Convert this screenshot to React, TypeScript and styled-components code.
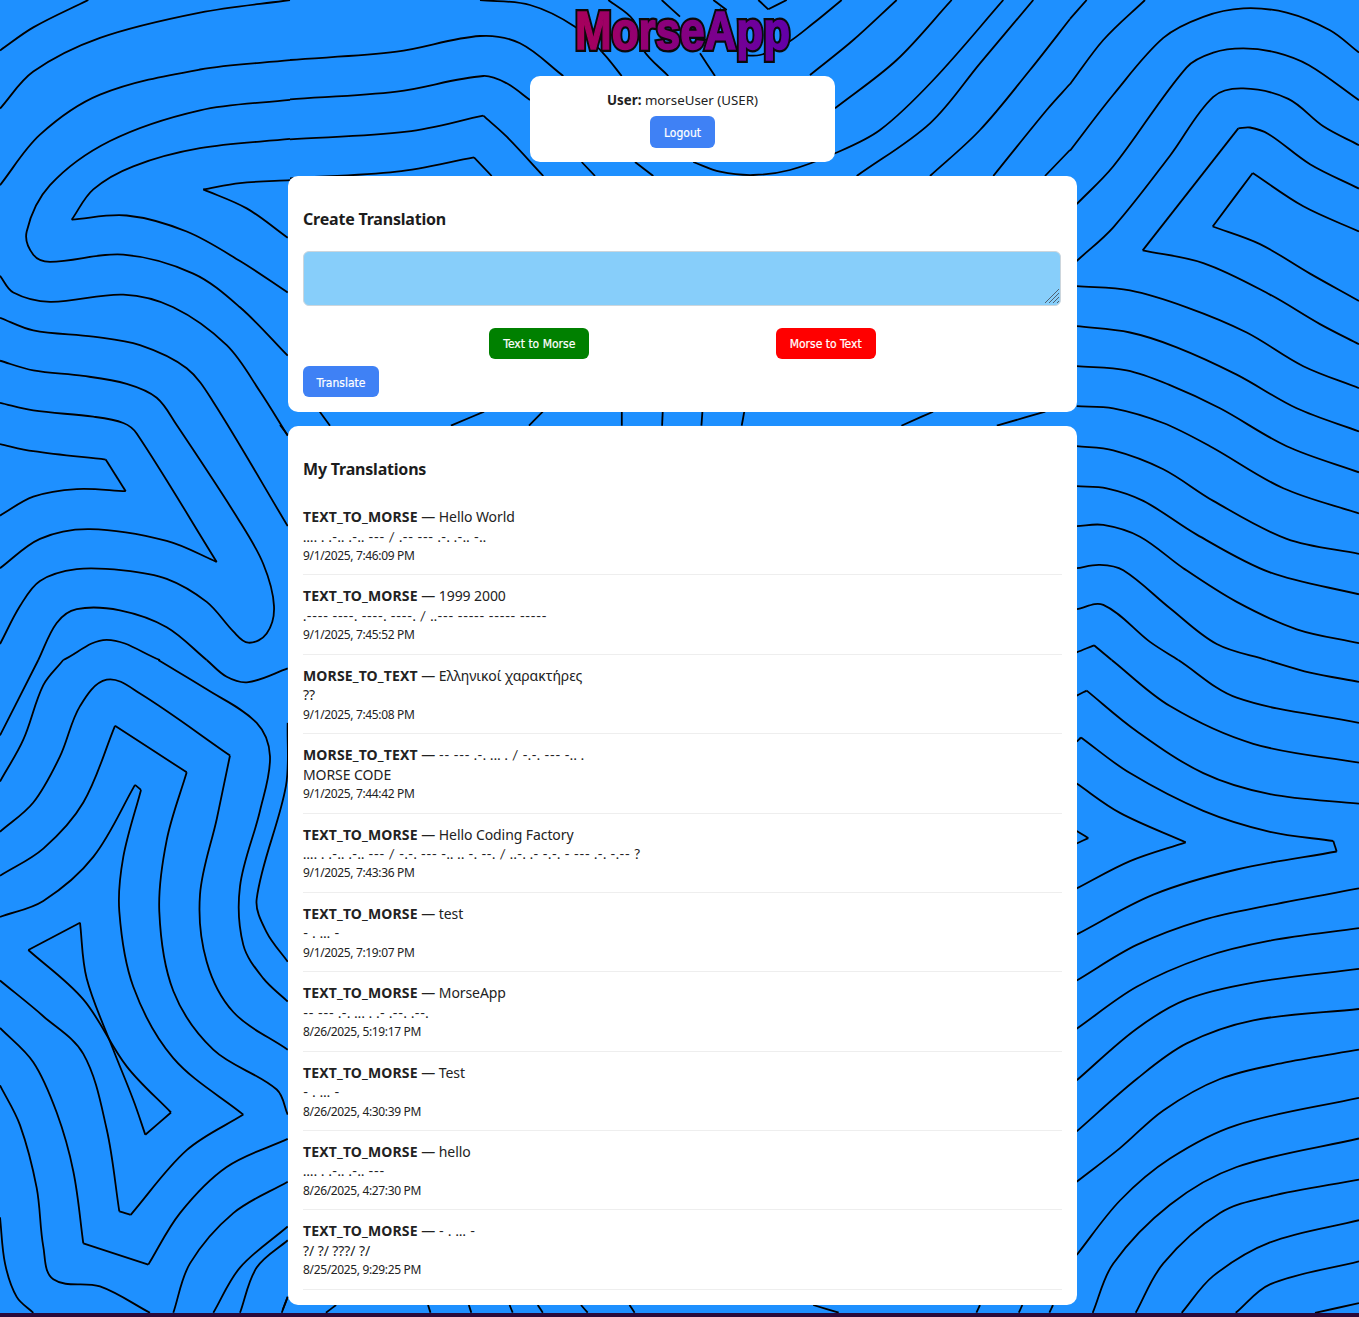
import React from "react";
import styled, { createGlobalStyle } from "styled-components";

const GlobalStyle = createGlobalStyle`
    html, body {
        margin: 0;
        padding: 0;
        background: #1e90ff;
    }
    body {
        font-family: "Noto Sans", "Open Sans", sans-serif;
        color: #222;
        overflow: hidden;
    }
    * {
        box-sizing: border-box;
    }
`;

// contour lines of the wallpaper, traced crop by crop
interface Crop {
    x: number;
    y: number;
    sx: number;
    sy: number;
    lines: number[][];
}

const crops: Crop[] = [
    {
        // left, top half
        x: 0, y: 0, sx: 1 / 3, sy: 660 / 1568,
        lines: [
            [0,120, 100,65, 265,0],
            [0,258, 100,170, 300,90, 600,30, 870,0],
            [0,440, 120,320, 300,225, 600,165, 870,143],
            [870,237, 600,262, 330,335, 150,440, 80,550, 100,605, 150,622, 370,605, 580,650, 720,730, 863,845],
            [870,330, 600,352, 400,395, 280,450, 215,522],
            [215,522, 380,512, 560,550, 720,620, 863,695],
            [870,428, 720,435, 610,450],
            [610,450, 740,495, 863,565],
            [0,655, 40,695, 150,717, 370,700, 520,730, 680,820, 780,930, 863,1035],
            [0,755, 100,785, 280,800, 420,820, 560,875, 640,955, 863,1250],
            [0,857, 100,880, 250,893, 380,912, 470,945, 530,1010, 720,1240, 790,1340, 822,1440, 800,1505, 745,1527, 700,1500, 620,1430, 500,1375, 370,1355, 230,1352, 120,1380, 60,1440, 0,1530],
            [0,957, 100,975, 280,990, 370,1005, 410,1030, 650,1335],
            [650,1335, 500,1285, 270,1257, 120,1280, 0,1350],
            [0,1055, 100,1072, 317,1092],
            [317,1092, 377,1167],
            [377,1167, 230,1162, 100,1180, 0,1225],
            [115,1568, 170,1480, 230,1447, 360,1450, 500,1490, 620,1568],
            [190,1568, 320,1520, 480,1568],
        ],
    },
    {
        // left, bottom half
        x: 0, y: 660, sx: 1 / 3, sy: 657 / 1568,
        lines: [
            [115,0, 0,180],
            [190,0, 130,60, 70,190, 0,290],
            [475,0, 620,70, 770,150, 810,230, 780,360, 720,540, 730,680, 790,760, 863,815],
            [620,0, 680,40, 745,53, 863,20],
            [863,150, 858,300, 770,570, 800,650, 863,720],
            [0,410, 100,340, 180,230, 240,110, 320,47, 420,80, 690,228],
            [690,228, 650,380, 600,560, 620,720, 700,840, 863,930],
            [0,515, 130,450, 250,340, 345,157],
            [345,157, 560,268],
            [560,268, 500,430, 478,600, 520,790, 640,930, 830,1025, 863,1085],
            [0,613, 130,575, 280,470, 405,298],
            [405,298, 423,310],
            [423,310, 370,470, 358,600, 400,780, 520,950, 730,1085],
            [730,1085, 560,1170, 392,1324],
            [392,1324, 358,1316],
            [358,1316, 320,1120, 250,940, 130,850, 0,765],
            [85,692, 240,627],
            [240,627, 260,760, 340,930, 400,1050, 436,1133],
            [436,1133, 513,1080],
            [513,1080, 380,970, 250,810, 85,692],
            [0,878, 100,960, 170,1080, 220,1220, 250,1392],
            [250,1392, 445,1443],
            [445,1443, 540,1320, 680,1210, 863,1143],
            [0,1015, 60,1110, 110,1260, 130,1400, 160,1478, 300,1495, 450,1558],
            [0,1330, 15,1440, 50,1520, 100,1558],
            [520,1558, 570,1440, 700,1320, 863,1245],
            [640,1558, 720,1450, 863,1352],
            [720,1558, 770,1450, 863,1385],
            [845,1558, 863,1520],
        ],
    },
    {
        // top middle, left of the logo
        x: 280, y: 0, sx: 1 / 3, sy: 1 / 3,
        lines: [
            [600,0, 750,15, 885,80, 970,160, 1025,228],
            [30,180, 350,155, 600,108, 720,130, 850,228],
            [30,298, 350,275, 610,228, 680,250, 750,300],
            [30,418, 380,395, 610,347],
            [610,347, 680,410, 790,528],
            [30,535, 350,515, 582,472],
            [582,472, 635,528],
            [985,0, 1060,60, 1090,150, 1165,228],
            [1145,0, 1200,50],
            [905,486, 945,528],
            [1065,486, 1120,528],
        ],
    },
    {
        // top middle, right of the logo
        x: 680, y: 0, sx: 1 / 3, sy: 1 / 3,
        lines: [
            [100,0, 140,30],
            [235,0, 265,28],
            [265,28, 320,0],
            [485,0, 400,70, 320,130, 240,165, 180,165],
            [60,160, 105,228],
            [650,0, 520,120, 390,225],
            [815,0, 650,180, 465,325],
            [970,0, 760,240, 600,390, 465,460, 330,510, 220,525, 120,515, 40,486],
            [1060,0, 900,190, 750,370, 530,528],
            [1170,57, 1050,210, 900,390, 750,528],
            [1170,252, 1100,330, 940,528],
            [1170,450, 1095,528],
        ],
    },
    {
        // right, top half
        x: 1070, y: 0, sx: 1 / 3, sy: 660 / 1568,
        lines: [
            [0,45, 50,0],
            [0,200, 100,95, 225,0],
            [0,358, 130,225, 280,90, 400,40, 520,20, 650,30, 780,72, 867,125],
            [20,485, 130,395, 350,160, 430,125, 520,115, 620,125, 717,155, 867,238],
            [20,620, 130,540, 300,370, 430,230, 520,210, 655,235, 760,300, 867,345],
            [218,595, 505,305],
            [505,305, 540,303, 595,318, 720,390, 867,448],
            [218,595, 400,625, 600,700, 750,770, 867,818],
            [428,538, 548,411],
            [548,411, 700,490, 867,550],
            [428,538, 570,580, 720,650, 867,715],
            [20,680, 180,690, 350,730, 530,790, 700,870, 867,922],
            [20,775, 180,790, 320,825, 500,890, 680,970, 867,1025],
            [20,870, 170,880, 300,915, 450,970, 650,1060, 867,1122],
            [20,965, 130,970, 280,1005, 420,1060, 640,1160, 867,1220],
            [20,1060, 130,1070, 280,1115, 430,1190, 650,1280, 867,1316],
            [20,1155, 110,1160, 220,1190, 380,1270, 600,1360, 867,1412],
            [20,1250, 100,1247, 210,1275, 340,1350, 500,1430, 680,1495, 867,1528],
            [20,1350, 90,1342, 160,1355, 300,1445, 440,1530, 590,1568],
            [20,1447, 100,1437, 240,1525, 325,1568],
            [20,1550, 72,1533],
            [72,1533, 125,1568],
        ],
    },
    {
        // right, bottom half
        x: 1070, y: 660, sx: 1 / 3, sy: 657 / 1568,
        lines: [
            [590,0, 720,30, 867,52],
            [325,0, 500,90, 867,150],
            [125,0, 300,110, 550,200, 867,245],
            [20,85, 50,73],
            [50,73, 200,170, 400,270, 600,320, 867,343],
            [20,195, 33,185],
            [33,185, 180,270, 400,360, 600,410, 790,432],
            [790,432, 800,457],
            [800,457, 500,500, 250,560, 20,655],
            [20,295, 150,365, 347,435],
            [347,435, 180,480, 20,545],
            [20,408, 55,425],
            [55,425, 20,438],
            [20,765, 200,680, 400,620, 600,585, 867,545],
            [20,880, 200,780, 400,710, 600,670, 867,640],
            [20,1003, 200,880, 350,810, 550,770, 867,737],
            [20,1125, 200,1000, 350,915, 550,860, 867,833],
            [20,1245, 150,1165, 280,1075, 450,1000, 650,960, 867,930],
            [20,1420, 150,1290, 300,1190, 500,1110, 867,1045],
            [68,1558, 130,1440, 300,1300, 500,1210, 867,1142],
            [197,1558, 280,1440, 450,1320, 600,1280, 867,1240],
            [335,1558, 430,1470, 600,1390, 867,1337],
            [497,1558, 600,1490, 867,1435],
            [735,1558, 867,1535],
        ],
    },
    {
        // strip between the two cards
        x: 280, y: 405, sx: 800 / 1568, sy: 1 / 3,
        lines: [
            [0,60, 15,90],
            [78,20, 98,62],
            [400,20, 335,62],
            [515,20, 488,62],
            [670,20, 670,62],
            [750,20, 749,62],
            [828,20, 826,62],
            [910,20, 905,62],
            [1280,20, 1218,62],
            [1500,20, 1405,62],
        ],
    },
    {
        // strip under the last card
        x: 280, y: 1280, sx: 800 / 1568, sy: 1 / 3,
        lines: [
            [15,50, 5,90],
            [110,75, 90,98],
            [290,75, 295,98],
            [370,75, 375,98],
            [450,75, 456,98],
            [505,75, 515,98],
            [590,75, 603,98],
            [685,75, 695,98],
            [1045,75, 1095,98],
            [1372,75, 1365,98],
            [1455,75, 1448,98],
            [1515,75, 1508,98],
        ],
    },
];

// spline through the traced points, handles scaled to the segment so uneven spacing stays smooth
const toPath = (crop: Crop, flat: number[]) => {
    const pts: [number, number][] = [];
    for (let i = 0; i < flat.length; i += 2) {
        pts.push([crop.x + flat[i] * crop.sx, crop.y + flat[i + 1] * crop.sy]);
    }
    const tangent = (i: number) => {
        const a = pts[i - 1] || pts[i];
        const b = pts[i + 1] || pts[i];
        const dx = b[0] - a[0];
        const dy = b[1] - a[1];
        const len = Math.hypot(dx, dy) || 1;
        return [dx / len, dy / len];
    };
    let d = `M${pts[0][0].toFixed(1)} ${pts[0][1].toFixed(1)}`;
    for (let i = 0; i < pts.length - 1; i++) {
        const p1 = pts[i];
        const p2 = pts[i + 1];
        const len = Math.hypot(p2[0] - p1[0], p2[1] - p1[1]) / 3;
        const t1 = tangent(i);
        const t2 = tangent(i + 1);
        d += `C${(p1[0] + t1[0] * len).toFixed(1)} ${(p1[1] + t1[1] * len).toFixed(1)} ${(p2[0] - t2[0] * len).toFixed(1)} ${(p2[1] - t2[1] * len).toFixed(1)} ${p2[0].toFixed(1)} ${p2[1].toFixed(1)}`;
    }
    return d;
};

const Wallpaper = styled.svg`
    position: fixed;
    top: 0;
    left: 0;
    width: 1359px;
    height: 1317px;
    z-index: 0;
`;

const Page = styled.div`
    position: relative;
    z-index: 1;
    display: flex;
    flex-direction: column;
    align-items: center;
    width: 1365px;
`;

const Logo = styled.h1`
    position: relative;
    margin: 0;
    height: 76px;
    padding-top: 1px;
    font-family: "Liberation Sans", sans-serif;
    font-size: 53px;
    line-height: 60px;
    font-weight: 700;
    transform: scaleX(0.83);
    color: #0a0a0a;
    -webkit-text-stroke: 6px #0a0a0a;

    &::after {
        content: attr(data-text);
        position: absolute;
        top: 1px;
        left: 0;
        background: linear-gradient(90deg, #a8005a, #6200a8);
        -webkit-background-clip: text;
        background-clip: text;
        color: transparent;
        -webkit-text-stroke: 1.5px transparent;
    }
`;

const Card = styled.section`
    width: 789px;
    padding: 15px;
    margin-bottom: 14px;
    background: #fff;
    border-radius: 10px;
`;

const UserCard = styled.div`
    display: flex;
    flex-direction: column;
    align-items: center;
    width: 305px;
    height: 86px;
    padding-top: 15px;
    margin-bottom: 14px;
    background: #fff;
    border-radius: 10px;
    font-size: 13.3px;
    line-height: 19px;
`;

const UserLine = styled.div`
    margin-bottom: 6px;
`;

const Heading = styled.h3`
    margin: 18px 0 0;
    font-size: 16px;
    letter-spacing: -0.2px;
    line-height: 20px;
    font-weight: 700;
    color: #1c1c1c;
`;

const InputBox = styled.div`
    position: relative;
    width: 758px;
    height: 55px;
    margin-top: 22px;
`;

const Input = styled.textarea`
    display: block;
    width: 100%;
    height: 100%;
    padding: 8px;
    background: #87cefa;
    border: 1.5px solid #ccd6dd;
    border-radius: 6px;
    outline: none;
    resize: none;
`;

const Grip = styled.svg`
    position: absolute;
    right: 2px;
    bottom: 3px;
    width: 14px;
    height: 14px;
`;

const ModeRow = styled.div`
    display: flex;
    justify-content: space-evenly;
    margin: 22px 0 7px;
`;

const Button = styled.button<{ $bg?: string; $w: number }>`
    width: ${({ $w }) => $w}px;
    height: 31px;
    padding: 1px 0 0;
    border: none;
    border-radius: 6px;
    background: ${({ $bg }) => $bg || "#3f81f5"};
    color: #fff;
    font-family: "DejaVu Sans Condensed", "DejaVu Sans", sans-serif;
    font-stretch: condensed;
    font-size: 12px;
    -webkit-text-stroke: 0.2px #fff;
    cursor: pointer;
`;

const LogoutButton = styled(Button)`
    height: 32px;
`;

const TranslateButton = styled(Button)`
    padding-top: 2px;
`;

const List = styled.ul`
    list-style: none;
    margin: 17.1px 0 0;
    padding: 0;
`;

const Item = styled.li`
    padding: 11px 0 9px;
    border-bottom: 1px solid #eee;
    font-size: 14px;
    line-height: 19.45px;
    letter-spacing: -0.08px;

    strong {
        letter-spacing: 0.15px;
    }
`;

const Morse = styled.span`
    font-family: "Lato", "Noto Sans", sans-serif;
    letter-spacing: 0.25px;
`;

const Stamp = styled.div`
    font-size: 12px;
    letter-spacing: -0.35px;
`;

const Footer = styled.div`
    width: 100%;
    height: 4px;
    margin-top: -5.8px;
    background: #2a0a3a;
`;

const translations = [
    { kind: "TEXT_TO_MORSE", input: "Hello World", output: ".... . .-.. .-.. --- / .-- --- .-. .-.. -..", at: "9/1/2025, 7:46:09 PM" },
    { kind: "TEXT_TO_MORSE", input: "1999 2000", output: ".---- ----. ----. ----. / ..--- ----- ----- -----", at: "9/1/2025, 7:45:52 PM" },
    { kind: "MORSE_TO_TEXT", input: "Ελληνικοί χαρακτήρες", output: "??", at: "9/1/2025, 7:45:08 PM" },
    { kind: "MORSE_TO_TEXT", input: "-- --- .-. ... . / -.-. --- -.. .", output: "MORSE CODE", at: "9/1/2025, 7:44:42 PM" },
    { kind: "TEXT_TO_MORSE", input: "Hello Coding Factory", output: ".... . .-.. .-.. --- / -.-. --- -.. .. -. --. / ..-. .- -.-. - --- .-. -.-- ?", at: "9/1/2025, 7:43:36 PM" },
    { kind: "TEXT_TO_MORSE", input: "test", output: "- . ... -", at: "9/1/2025, 7:19:07 PM" },
    { kind: "TEXT_TO_MORSE", input: "MorseApp", output: "-- --- .-. ... . .- .--. .--.", at: "8/26/2025, 5:19:17 PM" },
    { kind: "TEXT_TO_MORSE", input: "Test", output: "- . ... -", at: "8/26/2025, 4:30:39 PM" },
    { kind: "TEXT_TO_MORSE", input: "hello", output: ".... . .-.. .-.. ---", at: "8/26/2025, 4:27:30 PM" },
    { kind: "TEXT_TO_MORSE", input: "- . ... -", output: "?/ ?/ ???/ ?/", at: "8/25/2025, 9:29:25 PM" },
];

const Code = ({ text }: { text: string }) =>
    /^[.\-/ ?]*[.\-][.\-/ ?]*$/.test(text) ? <Morse>{text}</Morse> : <>{text}</>;

const App = () => {
    return (
        <>
            <GlobalStyle />
            <Wallpaper viewBox="0 0 1359 1317" fill="none" stroke="#000" strokeWidth={1.8}>
                {crops.map((crop, c) =>
                    crop.lines.map((line, l) => <path key={`${c}-${l}`} d={toPath(crop, line)} />)
                )}
            </Wallpaper>
            <Page>
                <Logo data-text="MorseApp">MorseApp</Logo>
                <UserCard>
                    <UserLine><strong>User:</strong> morseUser (USER)</UserLine>
                    <LogoutButton $w={65}>Logout</LogoutButton>
                </UserCard>
                <Card>
                    <Heading>Create Translation</Heading>
                    <InputBox>
                        <Input />
                        <Grip viewBox="0 0 14 14" stroke="#4f6070" strokeWidth={1}>
                            <path d="M0 14L14 0M4 14L14 4M8 14L14 8M12 14L14 12" />
                        </Grip>
                    </InputBox>
                    <ModeRow>
                        <Button $w={100} $bg="#008000">Text to Morse</Button>
                        <Button $w={100} $bg="#ff0000">Morse to Text</Button>
                    </ModeRow>
                    <TranslateButton $w={76}>Translate</TranslateButton>
                </Card>
                <Card>
                    <Heading>My Translations</Heading>
                    <List>
                        {translations.map((t, idx) => (
                            <Item key={idx}>
                                <div><strong>{t.kind}</strong> — <Code text={t.input} /></div>
                                <div><Code text={t.output} /></div>
                                <Stamp>{t.at}</Stamp>
                            </Item>
                        ))}
                    </List>
                </Card>
                <Footer />
            </Page>
        </>
    );
};

export default App;
